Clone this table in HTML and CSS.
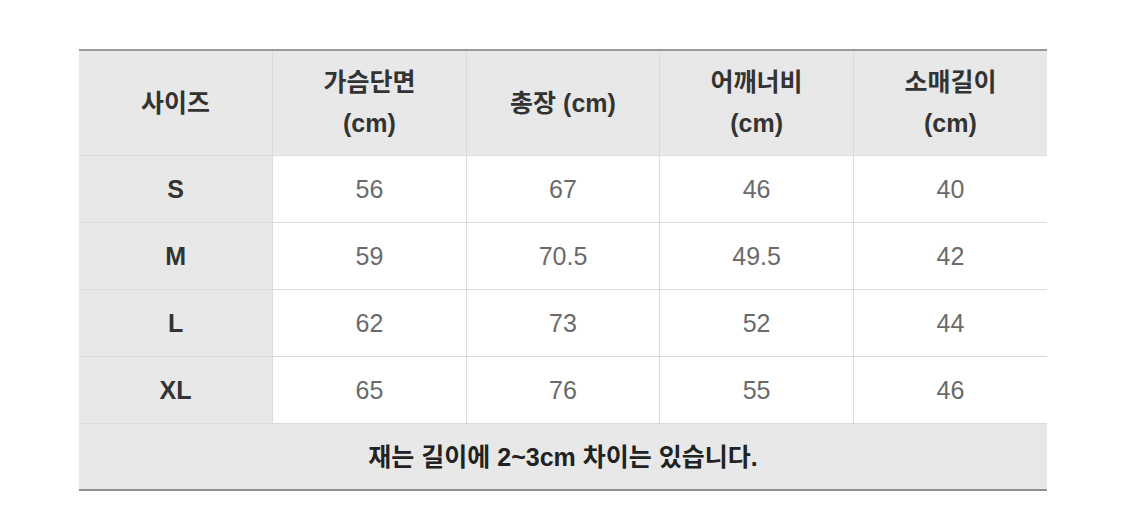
FILE: index.html
```html
<!DOCTYPE html>
<html lang="ko">
<head>
<meta charset="utf-8">
<title>사이즈표</title>
<link rel="stylesheet" href="styles.css">
</head>
<body>
<div class="page">
  <table class="size-table">
    <thead>
      <tr class="head-row">
        <th>사이즈</th>
        <th>가슴단면<br>(cm)</th>
        <th>총장 (cm)</th>
        <th>어깨너비<br>(cm)</th>
        <th>소매길이<br>(cm)</th>
      </tr>
    </thead>
    <tbody>
      <tr class="data-row"><th>S</th><td>56</td><td>67</td><td>46</td><td>40</td></tr>
      <tr class="data-row"><th>M</th><td>59</td><td>70.5</td><td>49.5</td><td>42</td></tr>
      <tr class="data-row"><th>L</th><td>62</td><td>73</td><td>52</td><td>44</td></tr>
      <tr class="data-row"><th>XL</th><td>65</td><td>76</td><td>55</td><td>46</td></tr>
      <tr class="note-row"><td colspan="5">재는 길이에 2~3cm 차이는 있습니다.</td></tr>
    </tbody>
  </table>
</div>
</body>
</html>
```

FILE: styles.css
```css
html, body {
  margin: 0;
  padding: 0;
  background: #ffffff;
}

.page {
  padding: 49px 0 0 79px;
}

.size-table {
  width: 968px;
  border-collapse: collapse;
  table-layout: fixed;
  font-family: "Liberation Sans", "Noto Sans CJK KR", sans-serif;
  font-size: 25px;
  border-top: 2px solid #9a9a9a;
  border-bottom: 2px solid #8e8e94;
}

.size-table th,
.size-table td {
  padding: 0;
  text-align: center;
  vertical-align: middle;
  border: 1px solid #dcdcdc;
}

.size-table tr > :first-child {
  border-left: none;
}

.size-table tr > :last-child {
  border-right: none;
}

.head-row th {
  height: 104px;
  background: #e8e8e8;
  color: #333333;
  font-weight: bold;
  line-height: 41px;
  border-top: none;
}

.data-row th,
.data-row td {
  height: 66px;
  line-height: 30px;
}

.data-row th {
  background: #e8e8e8;
  color: #333333;
  font-weight: bold;
}

.data-row td {
  background: #ffffff;
  color: #6a6a6a;
  font-weight: normal;
}

.note-row td {
  height: 65px;
  line-height: 30px;
  background: #e8e8e8;
  color: #222222;
  font-weight: bold;
  border-bottom: none;
}
```
